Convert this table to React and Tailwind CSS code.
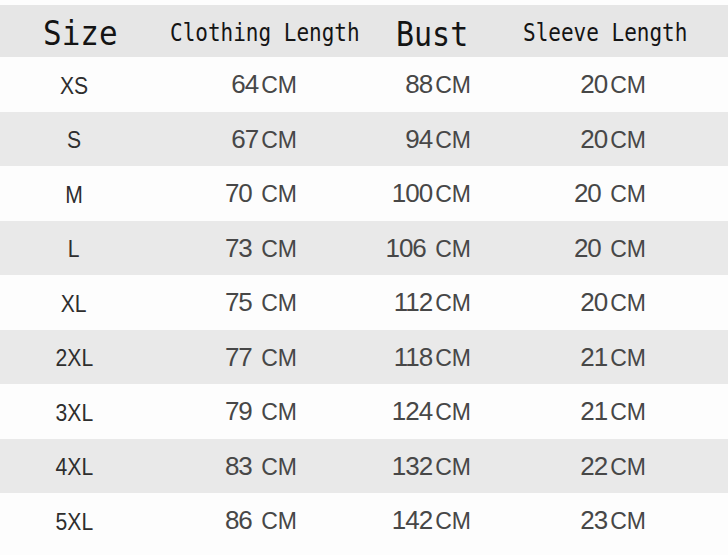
// Size chart table
const rows = [
    { size: 'XS', length: ['64', ''], bust: ['88', ''], sleeve: ['20', ''] },
    { size: 'S', length: ['67', ''], bust: ['94', ''], sleeve: ['20', ''] },
    { size: 'M', length: ['70', ' '], bust: ['100', ''], sleeve: ['20', ' '] },
    { size: 'L', length: ['73', ' '], bust: ['106', ' '], sleeve: ['20', ' '] },
    { size: 'XL', length: ['75', ' '], bust: ['112', ''], sleeve: ['20', ''] },
    { size: '2XL', length: ['77', ' '], bust: ['118', ''], sleeve: ['21', ''] },
    { size: '3XL', length: ['79', ' '], bust: ['124', ''], sleeve: ['21', ''] },
    { size: '4XL', length: ['83', ' '], bust: ['132', ''], sleeve: ['22', ''] },
    { size: '5XL', length: ['86', ' '], bust: ['142', ''], sleeve: ['23', ''] },
];

function Value({ value }) {
    return (
        <span className="whitespace-pre text-[#474747]">
            <span className="text-[26px] tracking-[-1px]">{value[0]}</span>
            <span className="text-[23px] ml-[3px]">{value[1] + 'CM'}</span>
        </span>
    );
}

export default function App() {
    return (
        <div className="w-[728px] h-[555px] bg-[#fdfdfd] pt-[5px] overflow-hidden font-['Liberation_Sans',Arial,sans-serif]">
            {/* Header */}
            <div className="h-[52px] pt-[7px] bg-[#e6e6e6] flex items-center text-[#141414] font-['DejaVu_Sans_Mono',monospace]">
                <div className="w-[170px] pl-[43px]">
                    <span className="inline-block text-[31px] scale-y-[1.1] leading-none">Size</span>
                </div>
                <div className="w-[226px]">
                    <span className="inline-block text-[21px] scale-y-[1.2] leading-none">Clothing Length</span>
                </div>
                <div className="w-[127px]">
                    <span className="inline-block text-[30px] scale-y-[1.15] leading-none">Bust</span>
                </div>
                <div className="flex-1">
                    <span className="inline-block text-[21px] scale-y-[1.2] leading-none">Sleeve Length</span>
                </div>
            </div>

            {/* Rows */}
            {rows.map((row, i) => (
                <div
                    key={row.size}
                    className={`h-[54.5px] flex items-center leading-none ${i % 2 === 1 ? 'bg-[#e9e9e9]' : 'bg-[#fdfdfd]'}`}
                >
                    <div className="w-[148px] pt-[3px] text-center">
                        <span className="inline-block text-[24px] text-[#2e2e2e] scale-x-[0.88]">{row.size}</span>
                    </div>
                    <div className="w-[149px] text-right">
                        <Value value={row.length} />
                    </div>
                    <div className="w-[174px] text-right">
                        <Value value={row.bust} />
                    </div>
                    <div className="w-[175px] text-right">
                        <Value value={row.sleeve} />
                    </div>
                </div>
            ))}
        </div>
    );
}
